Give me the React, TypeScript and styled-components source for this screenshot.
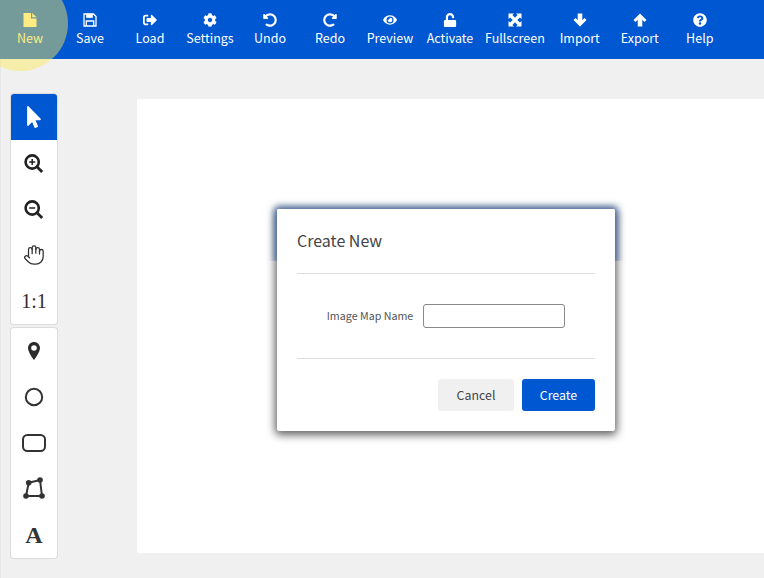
import styled, { createGlobalStyle } from "styled-components"
import {
    FaCog,
    FaEye,
    FaMousePointer,
    FaQuestionCircle,
    FaRedoAlt,
    FaSignOutAlt,
    FaUndoAlt,
    FaUnlock,
} from "react-icons/fa"
import { Hand } from "lucide-react"
import type { ReactNode } from "react"

const BLUE = "#0057d2"
const FONT = `"Noto Sans CJK SC", "Noto Sans", sans-serif`

const Global = createGlobalStyle`
    html, body {
        margin: 0;
        height: 100%;
        background: #f0f0f0;
        overflow: hidden;
    }
    body {
        font-family: ${FONT};
    }
`

const Page = styled.div`
    position: relative;
    width: 764px;
    height: 578px;
    overflow: hidden;
    background: #f0f0f0;
`

const Toolbar = styled.nav`
    display: flex;
    height: 59px;
    background: ${BLUE};
`

const ToolItem = styled.div<{ $active?: boolean }>`
    display: flex;
    flex-direction: column;
    align-items: center;
    min-width: 60px;
    box-sizing: border-box;
    padding: 13px 5px 0;
    color: ${(p) => (p.$active ? "#fdeea6" : "#fff")};
    font-size: 12.5px;
    line-height: 18px;

    svg {
        width: 14px;
        height: 14px;
        margin-bottom: 2px;
    }
`

const Ripple = styled.div`
    position: absolute;
    left: -27px;
    top: -24px;
    width: 95px;
    height: 95px;
    border-radius: 50%;
    background: rgba(255, 233, 88, 0.46);
    pointer-events: none;
`

const Workspace = styled.div`
    display: flex;
    align-items: flex-start;
    height: 519px;
    padding-left: 10px;
    border-left: 1px solid #e6e6e6;
`

const SideBar = styled.aside`
    display: flex;
    flex-direction: column;
    gap: 4px;
    width: 46px;
    margin-top: 35px;
`

const ToolGroup = styled.div`
    display: flex;
    flex-direction: column;
    width: 46px;
    border-radius: 3px;
    background: #fff;
    box-shadow: 0 0 0 1px #dcdcdc;
    overflow: hidden;
`

const SideButton = styled.div<{ $selected?: boolean }>`
    display: flex;
    align-items: center;
    justify-content: center;
    height: 46px;
    background: ${(p) => (p.$selected ? BLUE : "transparent")};
    color: ${(p) => (p.$selected ? "#fff" : "#333")};

    svg {
        display: block;
    }
`

const Ratio = styled.span`
    font-family: "Liberation Serif", serif;
    font-size: 20px;
    color: #3a2a2a;
`

const Letter = styled.span`
    font-family: "Liberation Serif", serif;
    font-weight: 700;
    font-size: 24px;
    color: #333;
`

const Canvas = styled.main`
    flex: 1;
    height: 454px;
    margin: 40px 0 0 80px;
    background: #fff;
`

const Dialog = styled.div`
    position: absolute;
    left: 277px;
    top: 209px;
    width: 338px;
    height: 222px;
    border-radius: 3px;
    box-shadow: 0 2px 8px 2px rgba(0, 0, 0, 0.62);
`

const BlueTint = styled.div`
    position: absolute;
    left: 0;
    right: 0;
    top: 0;
    height: 52px;
    box-shadow: 0 0 7px 2px rgb(70, 105, 165);
    clip-path: inset(-12px -12px 0 -12px);
`

const Card = styled.div`
    position: relative;
    display: flex;
    flex-direction: column;
    height: 100%;
    box-sizing: border-box;
    padding: 0 20px;
    border-radius: 3px;
    background: #fff;
`

const Title = styled.header`
    height: 65px;
    box-sizing: border-box;
    padding-top: 19px;
    line-height: 24px;
    border-bottom: 1px solid #ddd;
    font-size: 16px;
    color: #444;
`

const FormRow = styled.div`
    display: flex;
    align-items: center;
    justify-content: center;
    gap: 10px;
    height: 85px;
    border-bottom: 1px solid #ddd;
    box-sizing: border-box;
    padding-bottom: 1px;
`

const Label = styled.label`
    font-size: 10.7px;
    color: #555;
`

const TextInput = styled.input`
    width: 142px;
    height: 24px;
    box-sizing: border-box;
    border: 1px solid #888;
    border-radius: 3px;
    background: #fff;
`

const Footer = styled.footer`
    display: flex;
    justify-content: flex-end;
    gap: 8px;
    padding-top: 20px;
`

const Button = styled.button<{ $primary?: boolean }>`
    height: 32px;
    width: ${(p) => (p.$primary ? "73px" : "76px")};
    border: 0;
    border-radius: 3px;
    background: ${(p) => (p.$primary ? BLUE : "#f0f0f0")};
    color: ${(p) => (p.$primary ? "#fff" : "#444")};
    font-family: ${FONT};
    font-size: 12.4px;
    padding: 0;
`

const FileIcon = () => (
    <svg viewBox="0 0 14 14" fill="currentColor">
        <path d="M0.5 0 H8 V5.5 H13.5 V14 H0.5 Z" />
        <path d="M9.2 0 L13.5 4.3 H9.2 Z" />
    </svg>
)

const SaveIcon = () => (
    <svg viewBox="0 0 14 14" fill="none" stroke="currentColor" strokeWidth="1.3">
        <path d="M1 1 H10.5 L13 3.5 V13 H1 Z" />
        <path d="M3.5 1 H9.5 V4.6 H3.5 Z" fill="currentColor" strokeWidth="0.6" />
        <path d="M3.3 13 V8 H10.7 V13" />
    </svg>
)

const FullscreenIcon = () => (
    <svg viewBox="0 0 14 14" fill="currentColor">
        <path d="M0.5 0.5 H6 L4.4 2.1 L7 4.7 L9.6 2.1 L8 0.5 H13.5 V6 L11.9 4.4 L9.3 7 L11.9 9.6 L13.5 8 V13.5 H8 L9.6 11.9 L7 9.3 L4.4 11.9 L6 13.5 H0.5 V8 L2.1 9.6 L4.7 7 L2.1 4.4 L0.5 6 Z" />
    </svg>
)

const ArrowUpIcon = () => (
    <svg viewBox="0 0 14 14" fill="currentColor">
        <path d="M7 0.5 L13.5 7 L11.5 9 L9.3 6.8 V13.5 H4.7 V6.8 L2.5 9 L0.5 7 Z" />
    </svg>
)

const ArrowDownIcon = () => (
    <svg viewBox="0 0 14 14" fill="currentColor">
        <path d="M7 13.5 L13.5 7 L11.5 5 L9.3 7.2 V0.5 H4.7 V7.2 L2.5 5 L0.5 7 Z" />
    </svg>
)

const ZoomIcon = ({ plus }: { plus?: boolean }) => (
    <svg width="20" height="20" viewBox="0 0 20 20" fill="none" stroke="#222">
        <circle cx="8.2" cy="9" r="6.6" strokeWidth="2.6" />
        <path d="M13 13.8 L18.2 19" strokeWidth="2.8" />
        <path d="M5.2 9 H11.2" strokeWidth="1.5" />
        {plus && <path d="M8.2 6 V12" strokeWidth="1.5" />}
    </svg>
)

const PinIcon = () => (
    <svg width="12" height="18" viewBox="0 0 12 18" fill="#2c2c2c">
        <path
            fillRule="evenodd"
            d="M6 0 C2.7 0 0 2.7 0 6 C0 10.5 6 18 6 18 C6 18 12 10.5 12 6 C12 2.7 9.3 0 6 0 Z M6 3.2 A2.8 2.8 0 1 1 6 8.8 A2.8 2.8 0 1 1 6 3.2 Z"
        />
    </svg>
)

const CircleIcon = () => (
    <svg width="20" height="20" viewBox="0 0 20 20">
        <circle cx="10" cy="10" r="8.2" fill="none" stroke="#333" strokeWidth="2" />
    </svg>
)

const RectIcon = () => (
    <svg width="24" height="18" viewBox="0 0 24 18">
        <rect x="1" y="1" width="22" height="16" rx="4.5" fill="none" stroke="#333" strokeWidth="2" />
    </svg>
)

const PolygonIcon = () => (
    <svg width="24" height="24" viewBox="0 0 24 24">
        <path d="M6.7 5.7 L18 3 L20 19 L4 19 Z" fill="none" stroke="#333" strokeWidth="2" />
        <circle cx="6.7" cy="5.7" r="2.8" fill="#333" />
        <circle cx="18" cy="3" r="2.8" fill="#333" />
        <circle cx="20" cy="19" r="2.8" fill="#333" />
        <circle cx="4" cy="19" r="2.8" fill="#333" />
    </svg>
)

const tools: { label: string; icon: ReactNode }[] = [
    { label: "New", icon: <FileIcon /> },
    { label: "Save", icon: <SaveIcon /> },
    { label: "Load", icon: <FaSignOutAlt /> },
    { label: "Settings", icon: <FaCog /> },
    { label: "Undo", icon: <FaUndoAlt /> },
    { label: "Redo", icon: <FaRedoAlt /> },
    { label: "Preview", icon: <FaEye /> },
    { label: "Activate", icon: <FaUnlock /> },
    { label: "Fullscreen", icon: <FullscreenIcon /> },
    { label: "Import", icon: <ArrowDownIcon /> },
    { label: "Export", icon: <ArrowUpIcon /> },
    { label: "Help", icon: <FaQuestionCircle /> },
]

const App = () => {
    return (
        <Page>
            <Global />
            <Toolbar>
                {tools.map((tool) => (
                    <ToolItem key={tool.label} $active={tool.label === "New"}>
                        {tool.icon}
                        {tool.label}
                    </ToolItem>
                ))}
            </Toolbar>
            <Ripple />
            <Workspace>
                <SideBar>
                    <ToolGroup>
                        <SideButton $selected><FaMousePointer size={22} /></SideButton>
                        <SideButton><ZoomIcon plus /></SideButton>
                        <SideButton><ZoomIcon /></SideButton>
                        <SideButton><Hand size={22} strokeWidth={1.4} /></SideButton>
                        <SideButton><Ratio>1:1</Ratio></SideButton>
                    </ToolGroup>
                    <ToolGroup>
                        <SideButton><PinIcon /></SideButton>
                        <SideButton><CircleIcon /></SideButton>
                        <SideButton><RectIcon /></SideButton>
                        <SideButton><PolygonIcon /></SideButton>
                        <SideButton><Letter>A</Letter></SideButton>
                    </ToolGroup>
                </SideBar>
                <Canvas />
            </Workspace>
            <Dialog>
                <BlueTint />
                <Card>
                    <Title>Create New</Title>
                    <FormRow>
                        <Label>Image Map Name</Label>
                        <TextInput />
                    </FormRow>
                    <Footer>
                        <Button>Cancel</Button>
                        <Button $primary>Create</Button>
                    </Footer>
                </Card>
            </Dialog>
        </Page>
    )
}

export default App
